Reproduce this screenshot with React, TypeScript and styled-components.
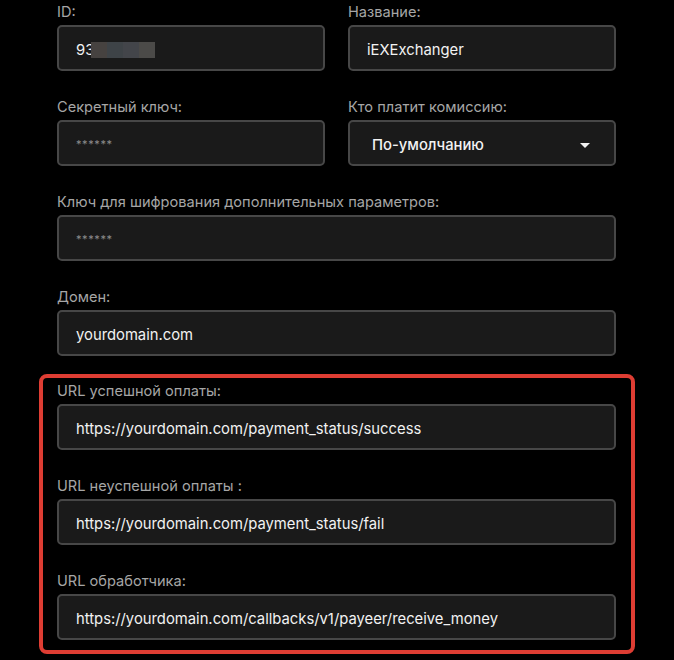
import styled, { createGlobalStyle } from 'styled-components';

const GlobalStyle = createGlobalStyle`
	html, body {
		margin: 0;
		padding: 0;
		background: #000;
	}
	body {
		font-family: Inter, 'Open Sans', Arial, sans-serif;
	}
`;

const Page = styled.div`
	width: 674px;
	height: 660px;
	box-sizing: border-box;
	padding: 2px 58px 0 57px;
	background: #000;
	overflow: hidden;
`;

const Grid = styled.div`
	display: grid;
	grid-template-columns: 1fr 1fr;
	column-gap: 23px;
	row-gap: 26px;
`;

const Field = styled.div<{ $wide?: boolean }>`
	display: flex;
	flex-direction: column;
	grid-column: ${(p) => (p.$wide ? '1 / -1' : 'auto')};
`;

const Label = styled.label`
	font-size: 14.6px;
	line-height: 20px;
	color: #a6a6a6;
	margin-bottom: 3px;
`;

const Box = styled.div`
	height: 46px;
	box-sizing: border-box;
	border: 2px solid #474747;
	border-radius: 5px;
	background: #1a1a1a;
	display: flex;
	align-items: center;
	padding: 4px 20px 0 17px;
	color: #f2f2f2;
	font-size: 14.8px;
`;

const Masked = styled.span`
	color: #8c8c8c;
	font-size: 11px;
	letter-spacing: 0.6px;
	margin-top: -3px;
`;

const Select = styled(Box)`
	padding: 4px 24px 0 22px;
	justify-content: space-between;
	font-weight: 500;
`;

const Caret = styled.span`
	width: 0;
	height: 0;
	border-left: 5px solid transparent;
	border-right: 5px solid transparent;
	border-top: 5px solid #f2f2f2;
`;

// blurred part of the id
const Mosaic = styled.span`
	display: inline-flex;
	height: 16px;
	margin-left: -3px;
`;

const Tile = styled.span<{ $c: string }>`
	display: inline-block;
	width: 16px;
	height: 16px;
	background: ${(p) => p.$c};
`;

const Highlight = styled.div`
	margin: 18px -19px 0 -18px;
	border: 4px solid #de3d33;
	border-radius: 8px;
	padding: 3px 15px 10px 14px;
	display: flex;
	flex-direction: column;
	gap: 26px;
`;

const tiles = ['#464240', '#3e4347', '#43454a', '#4b4a48'];

const urls = [
	{ label: 'URL успешной оплаты:', value: 'https://yourdomain.com/payment_status/success' },
	{ label: 'URL неуспешной оплаты :', value: 'https://yourdomain.com/payment_status/fail' },
	{ label: 'URL обработчика:', value: 'https://yourdomain.com/callbacks/v1/payeer/receive_money' },
];

export default function App() {
	return (
		<>
			<GlobalStyle />
			<Page>
				<Grid>
					<Field>
						<Label>ID:</Label>
						<Box>
							93
							<Mosaic>
								{tiles.map((c, i) => (
									<Tile key={i} $c={c} />
								))}
							</Mosaic>
						</Box>
					</Field>
					<Field>
						<Label>Название:</Label>
						<Box>iEXExchanger</Box>
					</Field>
					<Field>
						<Label>Секретный ключ:</Label>
						<Box>
							<Masked>******</Masked>
						</Box>
					</Field>
					<Field>
						<Label>Кто платит комиссию:</Label>
						<Select>
							По-умолчанию
							<Caret />
						</Select>
					</Field>
					<Field $wide>
						<Label>Ключ для шифрования дополнительных параметров:</Label>
						<Box>
							<Masked>******</Masked>
						</Box>
					</Field>
					<Field $wide>
						<Label>Домен:</Label>
						<Box>yourdomain.com</Box>
					</Field>
				</Grid>
				<Highlight>
					{urls.map((u) => (
						<Field key={u.label}>
							<Label>{u.label}</Label>
							<Box>{u.value}</Box>
						</Field>
					))}
				</Highlight>
			</Page>
		</>
	);
}
